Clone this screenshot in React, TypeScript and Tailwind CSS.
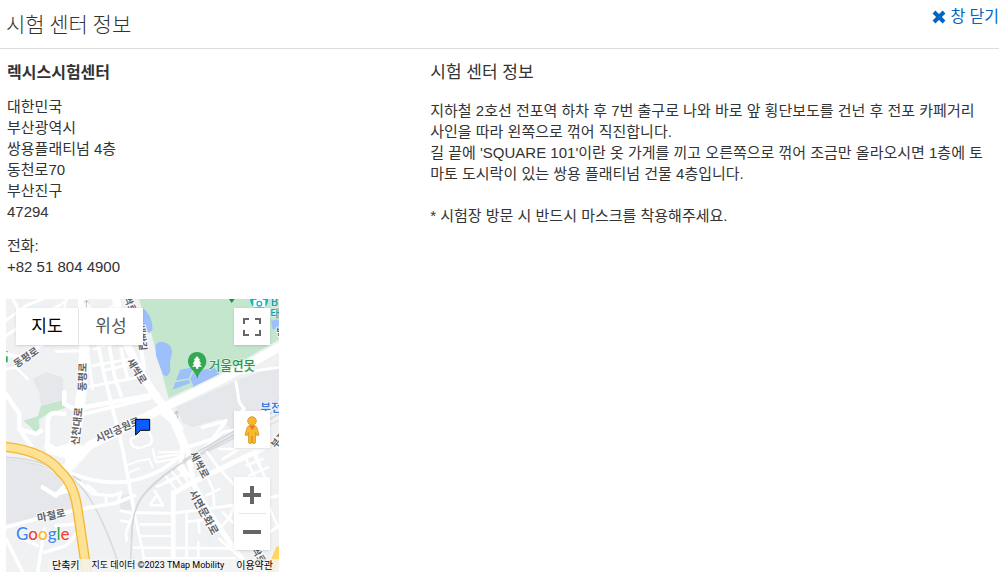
import * as React from "react";

const ADDRESS = ["대한민국", "부산광역시", "쌍용플래티넘 4층", "동천로70", "부산진구", "47294"];

const DIRECTIONS = [
  "지하철 2호선 전포역 하차 후 7번 출구로 나와 바로 앞 횡단보도를 건넌 후 전포 카페거리",
  "사인을 따라 왼쪽으로 꺾어 직진합니다.",
  "길 끝에 'SQUARE 101'이란 옷 가게를 끼고 오른쪽으로 꺾어 조금만 올라오시면 1층에 토",
  "마토 도시락이 있는 쌍용 플래티넘 건물 4층입니다.",
];

interface Road {
  d: string;
  width: number;
}

/** Streets, in map units (three per CSS pixel). */
const ROADS: Road[] = [
  // main avenues
  { d: "M195 500 L250 440 L330 400 L480 322 L640 245 L819 145", width: 26 },
  { d: "M640 240 L700 222 L819 205 M690 250 L700 310 L715 330 L690 350", width: 9 },
  { d: "M230 0 L235 150 L228 270 L212 390 L190 500", width: 30 },
  { d: "M330 0 L350 110 L400 215 L455 300 L485 335 L520 390", width: 24 },
  { d: "M520 390 L545 450 L562 553 L610 640 L687 753 L740 819", width: 15 },
  { d: "M345 40 L400 120 L415 210", width: 12 },
  { d: "M455 330 L500 370 L530 440 L525 500 L545 530", width: 14 },
  { d: "M170 500 L200 525 Q330 575 440 525 Q500 500 545 445 L620 420 L660 365 L590 385", width: 11 },
  { d: "M545 490 L650 400 L690 390", width: 8 },
  { d: "M125 440 L150 455 L200 440 L240 455 M130 455 L190 470", width: 20 },
  // north-west
  { d: "M0 65 L60 20 L110 0 M0 110 L60 70 L160 20 M60 70 L100 110 L180 60 M20 0 L55 60", width: 9 },
  { d: "M0 165 L40 175 L110 135 L170 110", width: 12 },
  { d: "M0 210 L30 205 L65 240", width: 8 },
  { d: "M180 0 L170 60 L215 100 M160 20 L185 0 M240 10 L270 50 L340 10", width: 7 },
  { d: "M150 158 L235 155 M265 150 L290 140 L350 130", width: 8 },
  { d: "M175 280 L175 315 L205 330 L455 285", width: 14 },
  { d: "M0 285 L40 345 L40 390 L75 440 M40 390 L90 405 L105 395", width: 13 },
  { d: "M175 345 L145 342 Q125 343 125 370 L125 450", width: 14 },
  { d: "M235 345 L430 298", width: 11 },
  // blocks between the two avenues
  { d: "M240 265 L395 235 M260 200 L370 180 M290 215 L380 195 M245 155 L260 270", width: 8 },
  { d: "M275 130 L295 230 L320 330 L350 450 L385 640 M310 140 L325 230 L345 290 M345 150 L365 240", width: 11 },
  { d: "M360 500 L400 485 L430 480 L440 505 M370 520 L400 508", width: 6 },
  { d: "M375 420 Q370 445 400 447 L430 438 Q445 430 430 400 M395 410 L375 420", width: 7 },
  { d: "M440 450 L450 490 L525 475 M460 460 L520 458 M455 475 L515 466", width: 7 },
  // south-west
  { d: "M0 685 L90 660 L215 632 L330 612 L385 590", width: 11 },
  { d: "M110 565 L150 590 L190 545 M150 585 L185 575", width: 13 },
  { d: "M0 720 L50 819 M115 690 L95 819 M115 760 L180 740 L215 700 M50 720 L95 740 M150 680 L215 675", width: 10 },
  { d: "M215 545 L260 585 L320 590 L345 580 M245 560 L270 580 M345 580 L335 610 M300 590 L300 610", width: 9 },
  { d: "M385 640 L417 793 M385 640 L360 700 L362 725 M345 635 L385 645 M345 665 L370 670", width: 8 },
  // southern grid
  { d: "M502 580 V819", width: 14 },
  { d: "M385 641 L500 643 L600 630 L687 618 L819 590", width: 9 },
  { d: "M404 676 H497 M404 711 H497 M385 746 L687 748 M412 778 H687", width: 8 },
  { d: "M542 645 V790 M577 665 L580 700 M577 730 V790 M545 668 L600 662", width: 8 },
  { d: "M432 618 L452 588 L472 620Z M445 575 L462 600", width: 7 },
  { d: "M502 583 L560 550 L687 488 L780 445", width: 15 },
  { d: "M452 563 L495 545 L540 520 M478 530 L510 572 M498 518 L530 560 M515 505 L548 550 M480 548 L525 528", width: 7 },
  { d: "M600 455 L640 510 L687 560 M640 450 H760 M650 480 L700 450 M590 500 L620 570 L625 620 M600 590 L640 570", width: 8 },
  { d: "M715 470 L760 560 L819 690 M740 460 L790 560 M720 500 L770 480 M730 530 L785 505 M745 450 L770 520", width: 7 },
  { d: "M640 690 L670 655 L687 620 M650 640 L680 670 M790 700 L819 680 M640 720 L720 790 L780 819", width: 8 },
];

interface MapLabel {
  text: string;
  x: number;
  y: number;
  rotate: number;
  size: number;
}

const LABELS: MapLabel[] = [
  { text: "동평로", x: 60, y: 175, rotate: -34, size: 30 },
  { text: "동평로", x: 230, y: 234, rotate: -88, size: 31 },
  { text: "신천대로", x: 213, y: 382, rotate: -84, size: 31 },
  { text: "시민공원로", x: 335, y: 393, rotate: -24, size: 31 },
  { text: "새싹로", x: 392, y: 216, rotate: 58, size: 30 },
  { text: "새싹길", x: 408, y: 115, rotate: 84, size: 29 },
  { text: "새싹로", x: 368, y: 5, rotate: 65, size: 29 },
  { text: "새싹로", x: 580, y: 498, rotate: 62, size: 31 },
  { text: "서면문화로", x: 592, y: 640, rotate: 61, size: 32 },
  { text: "마철로", x: 136, y: 650, rotate: -12, size: 31 },
  { text: "새싹로", x: 752, y: 758, rotate: 58, size: 29 },
  { text: "부전로", x: 826, y: 412, rotate: -50, size: 29 },
  { text: "범", x: 824, y: 96, rotate: 0, size: 28 },
];

const GOOGLE_LETTERS = [
  { char: "G", className: "text-[#4285f4]" },
  { char: "o", className: "text-[#ea4335]" },
  { char: "o", className: "text-[#fbbc04]" },
  { char: "g", className: "text-[#4285f4]" },
  { char: "l", className: "text-[#34a853]" },
  { char: "e", className: "text-[#ea4335]" },
];

function MapCanvas() {
  return (
    <svg
      viewBox="0 0 819 819"
      className="block h-full w-full font-['Roboto','Noto_Sans_CJK_KR',sans-serif]"
      aria-hidden="true"
    >
      <rect width="819" height="819" fill="#eff1f3" />

      {/* built-up areas */}
      <g fill="#e5e7eb">
        <path d="M0 485 L95 495 L180 540 L200 610 L195 635 L0 675Z" />
        <path d="M80 240 L120 220 L160 232 L172 240 L170 300 L105 318 L100 280Z" />
        <path d="M510 325 L690 245 L819 195 V330 L690 400 L640 360 L560 385 L530 370Z" />
        <path d="M335 590 L380 585 L385 630 L345 635Z" />
      </g>
      <path d="M0 268 H819 M612 0 V819" stroke="#e6e8ea" strokeWidth="1" />

      {/* park */}
      <path d="M398 0 L435 100 L488 298 L640 225 L819 122 V0Z" fill="#c3e6cd" />
      <path
        d="M105 320 L180 300 L182 325 L125 345 L98 362 Q105 395 90 402 L75 385 L52 365 L95 352Z"
        fill="#c3e6cd"
      />
      <path d="M0 157 H5 V190 H0Z" fill="#34a853" />
      <g fill="#9dc0fb">
        <path d="M408 25 Q438 45 440 90 L430 103 L405 85Z" />
        <path d="M448 138 Q465 118 490 138 Q505 155 492 185 L493 215 Q485 240 470 225 L450 170Z" />
        <path d="M500 272 L522 212 L555 206 L560 220 L625 205 L640 225 L560 265 L553 252Z" />
        <path d="M795 65 L819 60 V85 L800 92Z" />
      </g>
      <path d="M503 248 L550 240 L560 218 M550 240 L560 262" stroke="#c3e6cd" strokeWidth="5" fill="none" />

      {/* railways */}
      <g fill="none" stroke="#d9dcdf" strokeWidth="5">
        <path d="M819 330 L660 420 L542 483 Q440 545 402 603 Q375 650 377 720 L372 819" />
        <path d="M819 345 L660 430 L530 495 Q480 520 430 570" />
        <path d="M819 300 L640 410 M819 365 L690 420" strokeWidth="3" />
        <path d="M0 475 Q130 480 210 548 Q270 600 335 785" />
        <path d="M0 482 Q110 490 180 530" strokeWidth="3" />
      </g>

      <g fill="none" stroke="#fff" strokeLinecap="round" strokeLinejoin="round">
        {ROADS.map((road) => (
          <path key={road.d} d={road.d} strokeWidth={road.width} />
        ))}
      </g>
      <g fill="none" stroke="#d4d7db" strokeWidth="5">
        <path d="M700 400 L590 460 L542 483 Q440 545 402 603 Q375 650 377 720" />
        <path d="M700 388 L590 450 L530 485" />
        <path d="M200 530 L225 546" />
      </g>
      <g fill="none" stroke="#b9bdc3" strokeWidth="3">
        <path d="M241 25 V4 M235 11 L241 3 L247 11" />
        <path d="M516 358 L511 337 M506 345 L511 336 L519 343" />
      </g>

      {/* expressway */}
      <g fill="none">
        <path d="M-5 443 Q115 455 165 520 Q205 555 216 640 L243 825" stroke="#f6b632" strokeWidth="31" />
        <path d="M-5 443 Q115 455 165 520 Q205 555 216 640 L243 825" stroke="#fde293" strokeWidth="23" />
        <path d="M822 745 L792 819" stroke="#fdd663" strokeWidth="22" />
      </g>

      <g
        fill="#5f6368"
        stroke="#fff"
        strokeWidth="5"
        paintOrder="stroke"
        textAnchor="middle"
        fontWeight="700"
      >
        {LABELS.map((label) => (
          <text
            key={`${label.text}-${label.x}`}
            fontSize={label.size}
            dominantBaseline="central"
            transform={`translate(${label.x} ${label.y}) rotate(${label.rotate})`}
          >
            {label.text}
          </text>
        ))}
      </g>

      {/* points of interest */}
      <path d="M669 0 L677 12 L686 0Z" fill="#1e8e3e" />
      <path
        d="M573 159 C556 159 546 172 546 188 C546 208 569 214 574 239 C579 214 601 208 601 188 C601 172 590 159 573 159Z"
        fill="#34a853"
      />
      <path d="M573 171 L563 184 H567 L560 194 H566 L558 203 H570 V209 H577 V203 H588 L580 194 H586 L579 184 H583Z" fill="#fff" />
      <text x="608" y="213" fontSize="38" fontWeight="500" fill="#2f9450" stroke="#e6f5ea" strokeWidth="4" paintOrder="stroke">
        거울연못
      </text>
      <path d="M732 0 H786 Q788 24 762 33 Q734 27 732 0Z" fill="#12b5cb" />
      <path d="M742 3 H751 L754 -2 H768 L771 3 H778 V25 H742Z" fill="#fff" />
      <circle cx="760" cy="14" r="7" fill="#fff" stroke="#12b5cb" strokeWidth="4" />
      <g fill="#129eaf" stroke="#e6f5ea" strokeWidth="4" paintOrder="stroke" fontSize="34" fontWeight="500">
        <text x="795" y="21">B</text>
        <text x="793" y="57">태</text>
      </g>
      <text x="763" y="339" fontSize="35" fontWeight="700" fill="#3f7de0" stroke="#fff" strokeWidth="4" paintOrder="stroke">
        부전
      </text>

      {/* test centre marker */}
      <path d="M389 361 H431 V394 H404 L389 408Z" fill="#0a5cff" stroke="#000" strokeWidth="3" />
    </svg>
  );
}

function FullscreenIcon() {
  return (
    <svg viewBox="0 0 18 18" className="h-[18px] w-[18px]" fill="#666" aria-hidden="true">
      <path d="M0 0v6h2V2h4V0H0zm16 0h-4v2h4v4h2V0h-2zm0 16h-4v2h6v-6h-2v4zM2 12H0v6h6v-2H2v-4z" />
    </svg>
  );
}

function Pegman() {
  return (
    <svg viewBox="0 0 48 84" className="h-[28px] w-[16px]" aria-hidden="true">
      <g stroke="#c78318" strokeWidth="2" fill="#fbb829">
        <path d="M14 30 Q24 27 34 30 Q38 31 39 36 L45 56 Q44 60 39 59 L35 50 L34 81 Q30 84 25 81 L24 60 L23 81 Q18 84 14 81 L13 50 L9 59 Q4 60 3 56 L9 36 Q10 31 14 30Z" />
        <circle cx="24" cy="15" r="13" />
      </g>
      <path d="M15 29 H34 L25 42Z" fill="#e8772e" />
    </svg>
  );
}

function CenterMap() {
  return (
    <section
      aria-label="지도"
      className="relative mt-[22px] h-[273px] w-[273px] overflow-hidden font-['Roboto','Noto_Sans_CJK_KR',sans-serif]"
    >
      <MapCanvas />

      <div className="absolute left-2.5 top-[9px] flex h-[37px] bg-white text-[17px] shadow">
        <button type="button" aria-pressed="true" className="w-[62px] text-black">
          지도
        </button>
        <button type="button" aria-pressed="false" className="w-[65px] border-l border-gray-200 text-[#565656]">
          위성
        </button>
      </div>

      <button
        type="button"
        aria-label="전체화면보기로 전환"
        className="absolute right-[9px] top-[9px] flex h-[37px] w-9 items-center justify-center bg-white shadow"
      >
        <FullscreenIcon />
      </button>

      <button
        type="button"
        aria-label="스트리트 뷰"
        className="absolute right-[9px] top-[112px] flex h-[37px] w-9 items-center justify-center bg-white shadow"
      >
        <Pegman />
      </button>

      <div className="absolute right-[9px] top-[178px] flex w-9 flex-col items-center bg-white shadow">
        <button type="button" aria-label="확대" className="flex h-9 w-9 items-center justify-center">
          <svg viewBox="0 0 18 18" className="h-[18px] w-[18px]" fill="#666" aria-hidden="true">
            <path d="M0 7h7V0h4v7h7v4h-7v7H7v-7H0z" />
          </svg>
        </button>
        <div className="h-px w-[27px] bg-gray-200" />
        <button type="button" aria-label="축소" className="flex h-9 w-9 items-center justify-center">
          <svg viewBox="0 0 18 18" className="h-[18px] w-[18px]" fill="#666" aria-hidden="true">
            <path d="M0 7h18v4H0z" />
          </svg>
        </button>
      </div>

      <a
        href="#google"
        aria-label="Google"
        className="absolute bottom-6 left-2.5 font-['Lato',sans-serif] text-[17px] leading-7 font-medium [text-shadow:0_0_2px_#fff,0_0_2px_#fff]"
      >
        {GOOGLE_LETTERS.map((letter, i) => (
          <span key={i} className={letter.className}>
            {letter.char}
          </span>
        ))}
      </a>

      <div className="absolute bottom-0 right-0 flex h-[13px] items-center gap-3 bg-[#f5f5f5]/80 pl-1 pr-1.5 text-[10px] leading-[13px] whitespace-nowrap text-black">
        <button type="button">단축키</button>
        <span className="text-[9px]">지도 데이터 ©2023 TMap Mobility</span>
        <a href="#terms">이용약관</a>
      </div>
    </section>
  );
}

export default function App() {
  return (
    <div className="overflow-x-hidden bg-white font-['Liberation_Sans','Noto_Sans_CJK_KR',sans-serif] text-[15px] leading-[21px] text-[#333]">
      <header className="flex h-[49px] items-start justify-between border-b border-[#ddd] pl-1.5">
        <h1 className="py-2 font-['Noto_Sans_CJK_KR',sans-serif] text-[21px] leading-[30px] font-light">시험 센터 정보</h1>
        <a href="#close" className="flex items-center gap-1 pt-1.5 text-[16px] text-[#0066bf]">
          <svg viewBox="0 0 14 14" className="h-3.5 w-3.5" aria-hidden="true">
            <path d="M2 2 L12 12 M12 2 L2 12" stroke="currentColor" strokeWidth="4" />
          </svg>
          창 닫기
        </a>
      </header>

      <main className="grid grid-cols-12 pt-[13px]">
        <div className="col-span-5 pl-1.5">
          <div className="pl-px">
            <h2 className="text-[16px] font-bold">렉시스시험센터</h2>
            <address className="mt-[13px] not-italic">
              {ADDRESS.map((line) => (
                <div key={line}>{line}</div>
              ))}
            </address>
            <p className="mt-[13px]">
              전화:
              <br />
              +82 51 804 4900
            </p>
          </div>
          <CenterMap />
        </div>

        <div className="col-span-7 pl-3.5">
          <h2 className="text-[17px]">시험 센터 정보</h2>
          <p className="mt-[17px]">
            {DIRECTIONS.map((line) => (
              <React.Fragment key={line}>
                {line}
                <br />
              </React.Fragment>
            ))}
          </p>
          <p className="mt-[21px]">* 시험장 방문 시 반드시 마스크를 착용해주세요.</p>
        </div>
      </main>
    </div>
  );
}
